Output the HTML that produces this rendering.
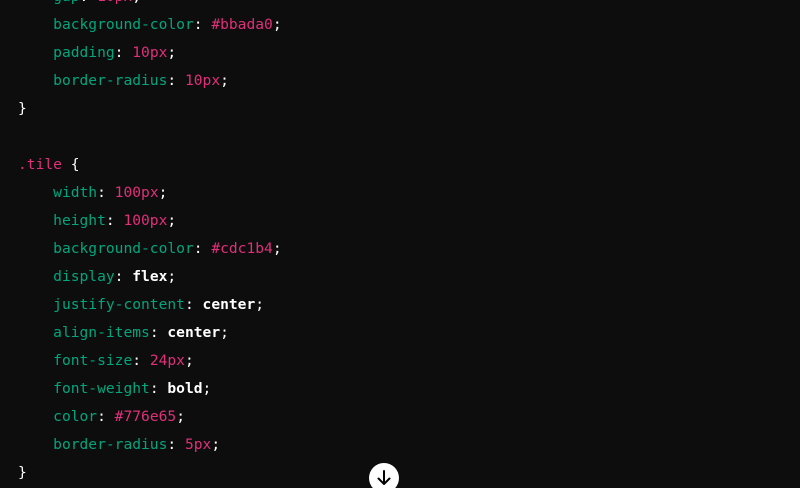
<!DOCTYPE html>
<html><head><style>
html,body{margin:0;width:800px;height:488px;background:#0d0d0d;overflow:hidden;position:relative}
pre{margin:0;position:absolute;left:18px;top:-17px;font-family:"DejaVu Sans Mono","Liberation Mono",monospace;font-size:14.6px;line-height:28px;color:#fff}
.p{color:#00a67d}.n{color:#df3079}.s{color:#df3079}b{font-weight:bold}
.btn{position:absolute;left:369px;top:463px;width:30px;height:30px;border-radius:50%;background:#fff}
</style></head><body>
<pre>    <span class="p">gap</span>: <span class="n">10px</span>;
    <span class="p">background-color</span>: <span class="n">#bbada0</span>;
    <span class="p">padding</span>: <span class="n">10px</span>;
    <span class="p">border-radius</span>: <span class="n">10px</span>;
}

<span class="s">.tile</span> {
    <span class="p">width</span>: <span class="n">100px</span>;
    <span class="p">height</span>: <span class="n">100px</span>;
    <span class="p">background-color</span>: <span class="n">#cdc1b4</span>;
    <span class="p">display</span>: <b>flex</b>;
    <span class="p">justify-content</span>: <b>center</b>;
    <span class="p">align-items</span>: <b>center</b>;
    <span class="p">font-size</span>: <span class="n">24px</span>;
    <span class="p">font-weight</span>: <b>bold</b>;
    <span class="p">color</span>: <span class="n">#776e65</span>;
    <span class="p">border-radius</span>: <span class="n">5px</span>;
}</pre>
<div class="btn"><svg width="30" height="30" viewBox="0 0 30 30"><path d="M15 8v13M9.5 15.5L15 21l5.5-5.5" stroke="#000" stroke-width="2" fill="none" stroke-linecap="round" stroke-linejoin="round"/></svg></div>
</body></html>
